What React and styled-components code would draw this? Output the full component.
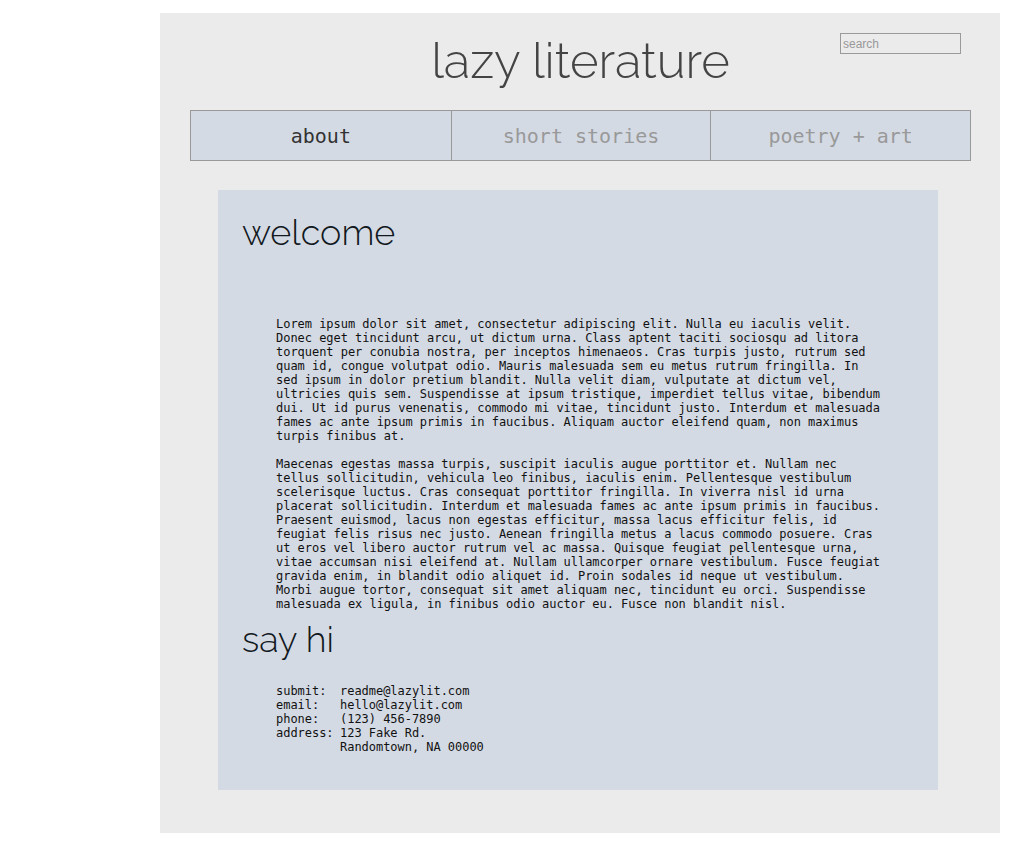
import React from "react";
import styled, { createGlobalStyle } from "styled-components";

const Global = createGlobalStyle`
  html, body { margin: 0; padding: 0; background: #ffffff; }
  body { font-family: "DejaVu Sans Mono", monospace; }
`;

const Page = styled.div`
  box-sizing: border-box;
  width: 840px;
  height: 820px;
  margin: 13px 0 0 160px;
  background: #ebebeb;
  padding: 0 29px 0 30px;
`;

const Header = styled.header`
  display: grid;
  grid-template-columns: 1fr auto 1fr;
  height: 97px;
`;

const Title = styled.h1`
  grid-column: 2;
  margin: 0;
  padding-top: 21px;
  font-family: "Raleway", "Lato", sans-serif;
  font-weight: 300;
  font-size: 49px;
  line-height: 54px;
  color: #444444;
`;

const Search = styled.input`
  grid-column: 3;
  justify-self: end;
  align-self: start;
  margin: 20px 10px 0 0;
  box-sizing: border-box;
  width: 121px;
  height: 21px;
  padding: 0 2px;
  border: 1px solid #9a9a9a;
  background: #ebebeb;
  font-family: "Liberation Sans", Arial, sans-serif;
  font-size: 12px;
  color: #444;
  outline: none;
  &::placeholder { color: #999999; }
`;

const Nav = styled.nav`
  display: grid;
  grid-template-columns: repeat(3, 1fr);
  border: 1px solid #999999;
  background: #d4dae4;
`;

const NavItem = styled.a`
  display: flex;
  align-items: center;
  justify-content: center;
  height: 49px;
  font-family: "DejaVu Sans Mono", monospace;
  font-size: 20px;
  color: ${(p) => (p.$active ? "#333333" : "#999999")};
  text-decoration: none;
  & + & { border-left: 1px solid #999999; }
`;

const Panel = styled.main`
  box-sizing: border-box;
  width: 720px;
  height: 600px;
  margin: 29px 0 0 28px;
  background: #d4dae4;
  padding: 14px 24px 0;
  color: #111;
`;

const Heading = styled.h2`
  margin: 0;
  font-family: "Raleway", "Lato", sans-serif;
  font-weight: 300;
  font-size: 36px;
  line-height: 56px;
  color: #111820;
`;

const Body = styled.div`
  padding: ${(p) => p.$top}px 0 0 34px;
  width: 610px;
`;

const Para = styled.p`
  margin: 0 0 14px;
  font-family: "DejaVu Sans Mono", monospace;
  font-size: 12px;
  line-height: 14px;
  letter-spacing: -0.035px;
  color: #111;
  &:last-child { margin-bottom: 0; }
`;

const Contact = styled.div`
  display: grid;
  grid-template-columns: 64px auto;
  font-family: "DejaVu Sans Mono", monospace;
  font-size: 12px;
  line-height: 14px;
  letter-spacing: -0.035px;
  color: #111;
`;

const Label = styled.span``;
const Value = styled.span`white-space: pre;`;

const p1 =
  "Lorem ipsum dolor sit amet, consectetur adipiscing elit. Nulla eu iaculis velit. Donec eget tincidunt arcu, ut dictum urna. Class aptent taciti sociosqu ad litora torquent per conubia nostra, per inceptos himenaeos. Cras turpis justo, rutrum sed quam id, congue volutpat odio. Mauris malesuada sem eu metus rutrum fringilla. In sed ipsum in dolor pretium blandit. Nulla velit diam, vulputate at dictum vel, ultricies quis sem. Suspendisse at ipsum tristique, imperdiet tellus vitae, bibendum dui. Ut id purus venenatis, commodo mi vitae, tincidunt justo. Interdum et malesuada fames ac ante ipsum primis in faucibus. Aliquam auctor eleifend quam, non maximus turpis finibus at.";
const p2 =
  "Maecenas egestas massa turpis, suscipit iaculis augue porttitor et. Nullam nec tellus sollicitudin, vehicula leo finibus, iaculis enim. Pellentesque vestibulum scelerisque luctus. Cras consequat porttitor fringilla. In viverra nisl id urna placerat sollicitudin. Interdum et malesuada fames ac ante ipsum primis in faucibus. Praesent euismod, lacus non egestas efficitur, massa lacus efficitur felis, id feugiat felis risus nec justo. Aenean fringilla metus a lacus commodo posuere. Cras ut eros vel libero auctor rutrum vel ac massa. Quisque feugiat pellentesque urna, vitae accumsan nisi eleifend at. Nullam ullamcorper ornare vestibulum. Fusce feugiat gravida enim, in blandit odio aliquet id. Proin sodales id neque ut vestibulum. Morbi augue tortor, consequat sit amet aliquam nec, tincidunt eu orci. Suspendisse malesuada ex ligula, in finibus odio auctor eu. Fusce non blandit nisl.";

export default function App() {
  return (
    <>
      <Global />
      <Page>
        <Header>
          <Title>lazy literature</Title>
          <Search placeholder="search" />
        </Header>
        <Nav>
          <NavItem $active>about</NavItem>
          <NavItem>short stories</NavItem>
          <NavItem>poetry + art</NavItem>
        </Nav>
        <Panel>
          <Heading>welcome</Heading>
          <Body $top={57}>
            <Para>{p1}</Para>
            <Para>{p2}</Para>
          </Body>
          <Heading>say hi</Heading>
          <Body $top={17}>
            <Contact>
              <Label>submit:</Label>
              <Value>readme@lazylit.com</Value>
              <Label>email:</Label>
              <Value>hello@lazylit.com</Value>
              <Label>phone:</Label>
              <Value>(123) 456-7890</Value>
              <Label>address:</Label>
              <Value>{"123 Fake Rd.\nRandomtown, NA 00000"}</Value>
            </Contact>
          </Body>
        </Panel>
      </Page>
    </>
  );
}
